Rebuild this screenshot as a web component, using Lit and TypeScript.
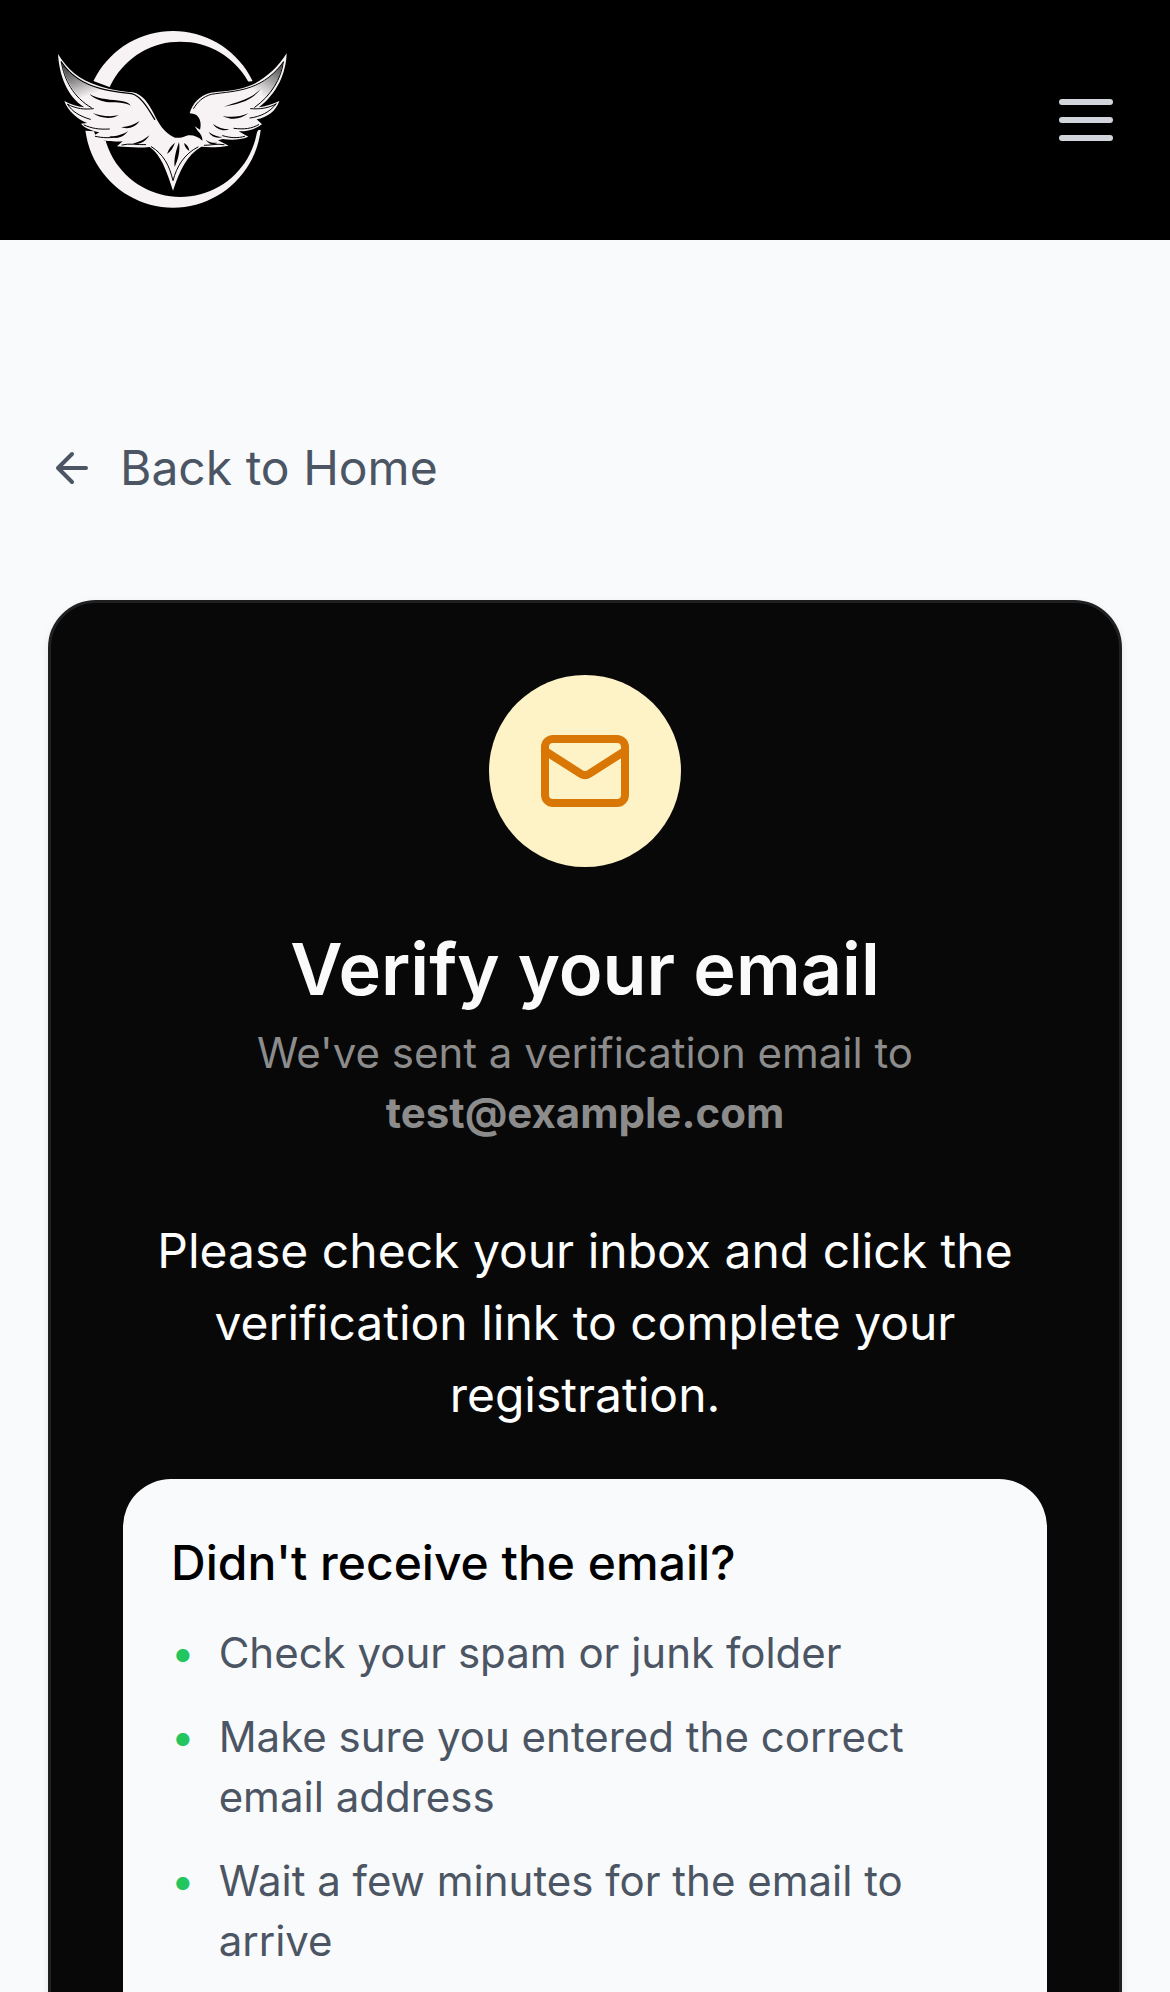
import { LitElement, html, css, svg } from "lit";
import { customElement, property } from "lit/decorators.js";

@customElement("eagle-logo")
class EagleLogo extends LitElement {
  static styles = css`
    :host {
      display: block;
    }
    .mark {
      display: block;
      width: 260px;
      height: 200px;
    }
  `;

  render() {
    return html`
      <svg class="mark" viewBox="0 0 780 600" role="img" aria-label="Eagle emblem">
        <defs>
          <linearGradient id="shadeLeft" gradientUnits="userSpaceOnUse" x1="85" y1="130" x2="125" y2="235">
            <stop offset="0" stop-color="#3c3c3c" />
            <stop offset="0.45" stop-color="#858585" />
            <stop offset="1" stop-color="#f7f3f5" />
          </linearGradient>
          <linearGradient id="shadeRight" gradientUnits="userSpaceOnUse" x1="715" y1="130" x2="660" y2="225">
            <stop offset="0" stop-color="#4a4a4a" />
            <stop offset="0.4" stop-color="#8f8f8f" />
            <stop offset="1" stop-color="#f7f3f5" />
          </linearGradient>
        </defs>
        ${svg`
        <path fill="#f7f3f5" fill-rule="evenodd"
          d="M399 33a265 265 0 1 0 .1 0zM421 65a233 233 0 1 1-.1 0z" />
        <path fill="#000" d="M100 150L162 184L210 202L290 210L300 390L196 362L168 352L162 334L100 330z" />
        <path fill="#000" d="M610 186L636 184L720 150L720 328L655 330L642 352L600 352L560 250z" />
        <path fill="#f7f3f5"
          d="M54 102C82 148 118 180 175 197C215 211 245 213 278 217C308 223 326 251 341 280
             C355 309 372 340 405 353C420 355 431 350 440 347C455 343 474 349 487 362
             C488 350 483 343 473 332L464 319L480 329C484 312 482 296 470 286
             C462 281 455 281 449 280C457 251 478 226 512 218C555 213 600 212 640 193
             C683 170 715 140 740 100C738 160 712 219 657 262C680 258 700 252 718 243
             C708 273 682 292 650 298L666 313C646 328 620 335 596 334L625 350
             C600 361 570 360 548 357L534 361L566 377C530 383 505 382 484 380
             C440 405 420 450 399 512C379 450 363 405 329 381C298 384 265 382 231 379
             L248 364C224 366 195 362 181 360L154 351L178 337C155 332 133 324 123 311
             L141 309C110 296 84 273 73 243C94 254 113 260 133 262C80 228 58 165 54 102z" />
        <path fill="url(#shadeLeft)"
          d="M66 130C90 168 128 192 180 206C195 211 215 215 235 218L200 235L148 225
             L158 262C105 232 75 180 66 130z" />
        <path fill="url(#shadeRight)"
          d="M728 128C705 160 670 190 630 204C610 211 585 216 562 218L600 240L668 210
             L650 258C695 225 722 175 728 128z" />
        <g fill="none" stroke="#000" stroke-width="3" stroke-linecap="round">
          <path d="M64 126C90 165 128 191 180 205C215 215 248 218 275 221C300 228 318 254 344 298" stroke-width="4" />
          <path d="M64 126C72 178 100 232 154 263" />
          <path d="M730 126C706 160 672 188 630 202C590 216 550 217 514 223C489 230 472 246 461 265" />
          <path d="M730 126C724 176 694 226 644 262" />
          <path d="M83 253C96 275 120 289 151 298M83 253C110 267 134 269 160 266" />
          <path d="M708 252C690 276 662 290 630 294M708 252C684 265 660 268 632 266" />
          <path d="M132 315C155 325 176 329 208 327M656 314C635 326 612 329 582 325" />
          <path d="M166 349C188 354 212 355 240 349M614 349C594 355 570 354 548 347" />
          <path d="M246 375C268 369 290 375 317 374M552 374C530 370 514 376 493 376" />
          <path d="M334 380C371 403 388 436 399 482C410 440 432 402 474 381" />
        </g>
        <g fill="#000">
          <path d="M148 222C180 240 215 238 245 243C260 246 268 250 272 257C255 247 232 248 208 247C182 244 163 236 148 222z" />
          <path d="M158 279C178 288 210 291 237 286C214 298 183 296 158 279z" />
          <path d="M243 322C266 320 284 313 299 303C287 320 267 329 243 322z" />
          <path d="M207 349C229 350 250 343 264 333C252 351 231 359 207 349z" />
          <path d="M278 371C300 366 316 357 328 346C317 365 300 376 278 371z" />
          <path d="M662 208C640 235 612 247 580 254L551 260C592 245 629 239 662 208z" />
          <path d="M548 288C575 293 600 291 625 280C603 298 575 302 548 288z" />
          <path d="M519 312C533 322 550 328 568 328C549 335 530 328 519 312z" />
          <path d="M506 336C520 346 535 351 548 351C530 357 514 350 506 336z" />
          <path d="M497 359C508 367 521 370 532 368C518 377 505 371 497 359z" />
          <path d="M405 368C400 382 393 394 381 402C386 386 394 376 405 368z" />
          <path d="M417 366C421 392 415 418 404 441C401 414 409 390 417 366z" />
          <path d="M432 369C441 374 447 382 448 393C439 388 434 380 432 369z" />
        </g>`}
      </svg>
    `;
  }
}

@customElement("site-header")
class SiteHeader extends LitElement {
  static styles = css`
    :host {
      display: block;
      background: #000;
    }
    .bar {
      display: flex;
      align-items: center;
      justify-content: space-between;
      padding: 20px 48px 20px 40px;
    }
    .menu {
      display: block;
      padding: 0;
      border: 0;
      background: none;
      color: #d1d5db;
      cursor: pointer;
    }
    .menu-icon {
      display: block;
      width: 72px;
      height: 72px;
    }
  `;

  render() {
    return html`
      <header class="bar">
        <eagle-logo></eagle-logo>
        <button class="menu" type="button" aria-label="Open menu">
          <svg class="menu-icon" viewBox="0 0 24 24" fill="none" stroke="currentColor" stroke-width="2" stroke-linecap="round" aria-hidden="true">
            <path d="M4 6h16M4 12h16M4 18h16" />
          </svg>
        </button>
      </header>
    `;
  }
}

@customElement("verify-card")
class VerifyCard extends LitElement {
  @property() email = "";
  @property({ attribute: false }) tips: string[] = [];

  static styles = css`
    :host {
      display: block;
    }
    h1,
    h2,
    p,
    ul {
      margin: 0;
      padding: 0;
    }
    h1,
    h2 {
      font-optical-sizing: auto;
    }
    .card {
      border: 3px solid #1f2021;
      border-radius: 48px;
      background: #080808;
      box-shadow: 0 3px 9px rgba(0, 0, 0, 0.08);
      color: #fafafa;
    }
    .head {
      display: flex;
      flex-direction: column;
      align-items: center;
      gap: 18px;
      padding: 72px;
      text-align: center;
    }
    .badge {
      display: flex;
      align-items: center;
      justify-content: center;
      width: 192px;
      height: 192px;
      margin-bottom: 48px;
      border-radius: 50%;
      background: #fef3c7;
      color: #d97706;
    }
    .mail {
      width: 96px;
      height: 96px;
    }
    .title {
      font-size: 72px;
      line-height: 72px;
      font-weight: 600;
    }
    .lead {
      color: #8c8c8c;
      font-size: 42px;
      line-height: 60px;
    }
    .address {
      display: block;
      font-weight: 700;
    }
    .body {
      display: flex;
      flex-direction: column;
      gap: 48px;
      padding: 0 72px 72px;
    }
    .message {
      color: #fff;
      font-size: 48px;
      line-height: 72px;
      text-align: center;
    }
    .help {
      display: flex;
      flex-direction: column;
      gap: 24px;
      padding: 48px 48px 96px;
      border-radius: 48px;
      background: #f9fafb;
    }
    .question {
      color: #000;
      font-size: 48px;
      line-height: 72px;
      font-weight: 500;
    }
    .tips {
      display: flex;
      flex-direction: column;
      gap: 24px;
      color: #4b5563;
      font-size: 42px;
      line-height: 60px;
      list-style: none;
    }
    .tip {
      display: flex;
      align-items: flex-start;
      gap: 24px;
    }
    .dot {
      color: #22c55e;
    }
  `;

  render() {
    return html`
      <section class="card">
        <div class="head">
          <div class="badge">
            <svg class="mail" viewBox="0 0 24 24" fill="none" stroke="currentColor" stroke-width="2" stroke-linecap="round" stroke-linejoin="round" aria-hidden="true">
              <rect x="2" y="4" width="20" height="16" rx="2" />
              <path d="m22 7-8.97 5.7a1.94 1.94 0 0 1-2.06 0L2 7" />
            </svg>
          </div>
          <h1 class="title">Verify your email</h1>
          <p class="lead">We've sent a verification email to <strong class="address">${this.email}</strong></p>
        </div>
        <div class="body">
          <p class="message">Please check your inbox and click the verification link to complete your registration.</p>
          <div class="help">
            <h2 class="question">Didn't receive the email?</h2>
            <ul class="tips">
              ${this.tips.map((tip) => html`<li class="tip"><span class="dot" aria-hidden="true">•</span><span>${tip}</span></li>`)}
            </ul>
          </div>
        </div>
      </section>
    `;
  }
}

@customElement("app-root")
class AppRoot extends LitElement {
  static styles = css`
    :host {
      display: block;
      min-height: 100vh;
      background: #f9fafb;
      font-family: Inter, "Liberation Sans", sans-serif;
      font-optical-sizing: none;
    }
    .page {
      display: flex;
      flex-direction: column;
      gap: 96px;
      padding: 192px 48px 96px;
    }
    .back {
      display: flex;
      align-items: center;
      align-self: flex-start;
      gap: 24px;
      color: #4b5563;
      font-size: 48px;
      line-height: 72px;
      text-decoration: none;
    }
    .arrow {
      width: 48px;
      height: 48px;
    }
  `;

  private tips = [
    "Check your spam or junk folder",
    "Make sure you entered the correct email address",
    "Wait a few minutes for the email to arrive",
  ];

  render() {
    return html`
      <site-header></site-header>
      <main class="page">
        <a class="back" href="/">
          <svg class="arrow" viewBox="0 0 24 24" fill="none" stroke="currentColor" stroke-width="2" stroke-linecap="round" stroke-linejoin="round" aria-hidden="true">
            <path d="m12 19-7-7 7-7M19 12H5" />
          </svg>
          Back to Home
        </a>
        <verify-card email="test@example.com" .tips=${this.tips}></verify-card>
      </main>
    `;
  }
}
